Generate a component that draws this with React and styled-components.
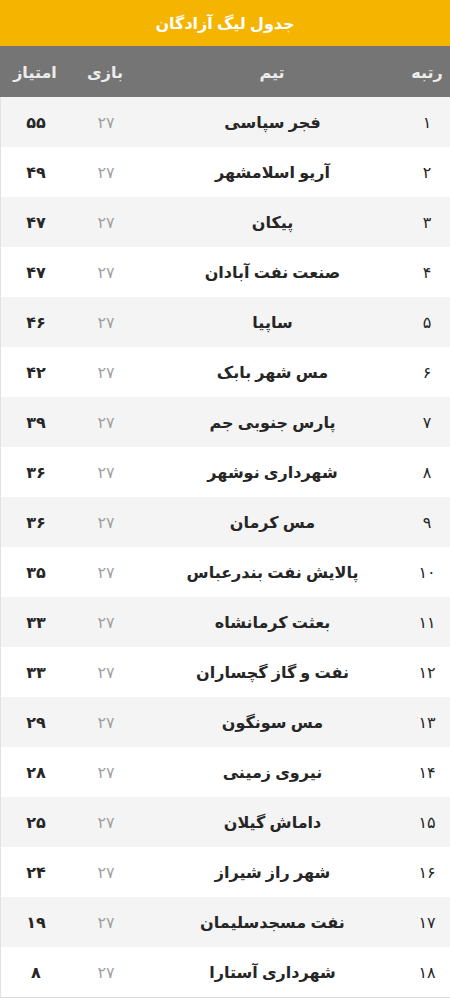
import React from "react";
import styled, { createGlobalStyle } from "styled-components";

const GlobalStyle = createGlobalStyle`
  html, body {
    margin: 0;
    padding: 0;
    background: #ffffff;
  }
  body {
    font-family: "Noto Sans", "DejaVu Sans", sans-serif;
  }
`;

const teams = [
  ["۱", "فجر سپاسی", "۲۷", "۵۵"],
  ["۲", "آریو اسلامشهر", "۲۷", "۴۹"],
  ["۳", "پیکان", "۲۷", "۴۷"],
  ["۴", "صنعت نفت آبادان", "۲۷", "۴۷"],
  ["۵", "ساپیا", "۲۷", "۴۶"],
  ["۶", "مس شهر بابک", "۲۷", "۴۲"],
  ["۷", "پارس جنوبی جم", "۲۷", "۳۹"],
  ["۸", "شهرداری نوشهر", "۲۷", "۳۶"],
  ["۹", "مس کرمان", "۲۷", "۳۶"],
  ["۱۰", "پالایش نفت بندرعباس", "۲۷", "۳۵"],
  ["۱۱", "بعثت کرمانشاه", "۲۷", "۳۳"],
  ["۱۲", "نفت و گاز گچساران", "۲۷", "۳۳"],
  ["۱۳", "مس سونگون", "۲۷", "۲۹"],
  ["۱۴", "نیروی زمینی", "۲۷", "۲۸"],
  ["۱۵", "داماش گیلان", "۲۷", "۲۵"],
  ["۱۶", "شهر راز شیراز", "۲۷", "۲۴"],
  ["۱۷", "نفت مسجدسلیمان", "۲۷", "۱۹"],
  ["۱۸", "شهرداری آستارا", "۲۷", "۸"],
];

const Wrapper = styled.div`
  width: 450px;
  direction: rtl;
`;

const Title = styled.div`
  height: 46px;
  background: #f4b400;
  color: #ffffff;
  font-size: 16px;
  font-weight: bold;
  display: flex;
  align-items: center;
  justify-content: center;
`;

const Table = styled.div`
  border-left: 1px solid #e2e2e2;
  border-bottom: 1px solid #dcdcdc;
`;

const Row = styled.div`
  display: grid;
  grid-template-columns: 46px 1fr 70px 70px;
  height: ${(p) => (p.$head ? "51px" : "50px")};
  align-items: center;
  background: ${(p) => (p.$head ? "#757575" : p.$odd ? "#f4f4f4" : "#ffffff")};
  margin-left: ${(p) => (p.$head ? "-1px" : "0")};
`;

const Cell = styled.div`
  text-align: center;
  font-size: ${(p) => (p.$head ? "16px" : "16px")};
  font-weight: ${(p) => (p.$muted || p.$thin ? "normal" : "bold")};
  color: ${(p) => (p.$head ? "#ececec" : p.$muted ? "#a0a0a0" : "#262626")};
`;

export default function App() {
  return (
    <Wrapper>
      <GlobalStyle />
      <Title>جدول لیگ آزادگان</Title>
      <Table>
        <Row $head>
          <Cell $head>رتبه</Cell>
          <Cell $head>تیم</Cell>
          <Cell $head>بازی</Cell>
          <Cell $head>امتیاز</Cell>
        </Row>
        {teams.map(([rank, name, games, points], i) => (
          <Row key={rank} $odd={i % 2 === 0}>
            <Cell $thin>{rank}</Cell>
            <Cell>{name}</Cell>
            <Cell $muted>{games}</Cell>
            <Cell>{points}</Cell>
          </Row>
        ))}
      </Table>
    </Wrapper>
  );
}
